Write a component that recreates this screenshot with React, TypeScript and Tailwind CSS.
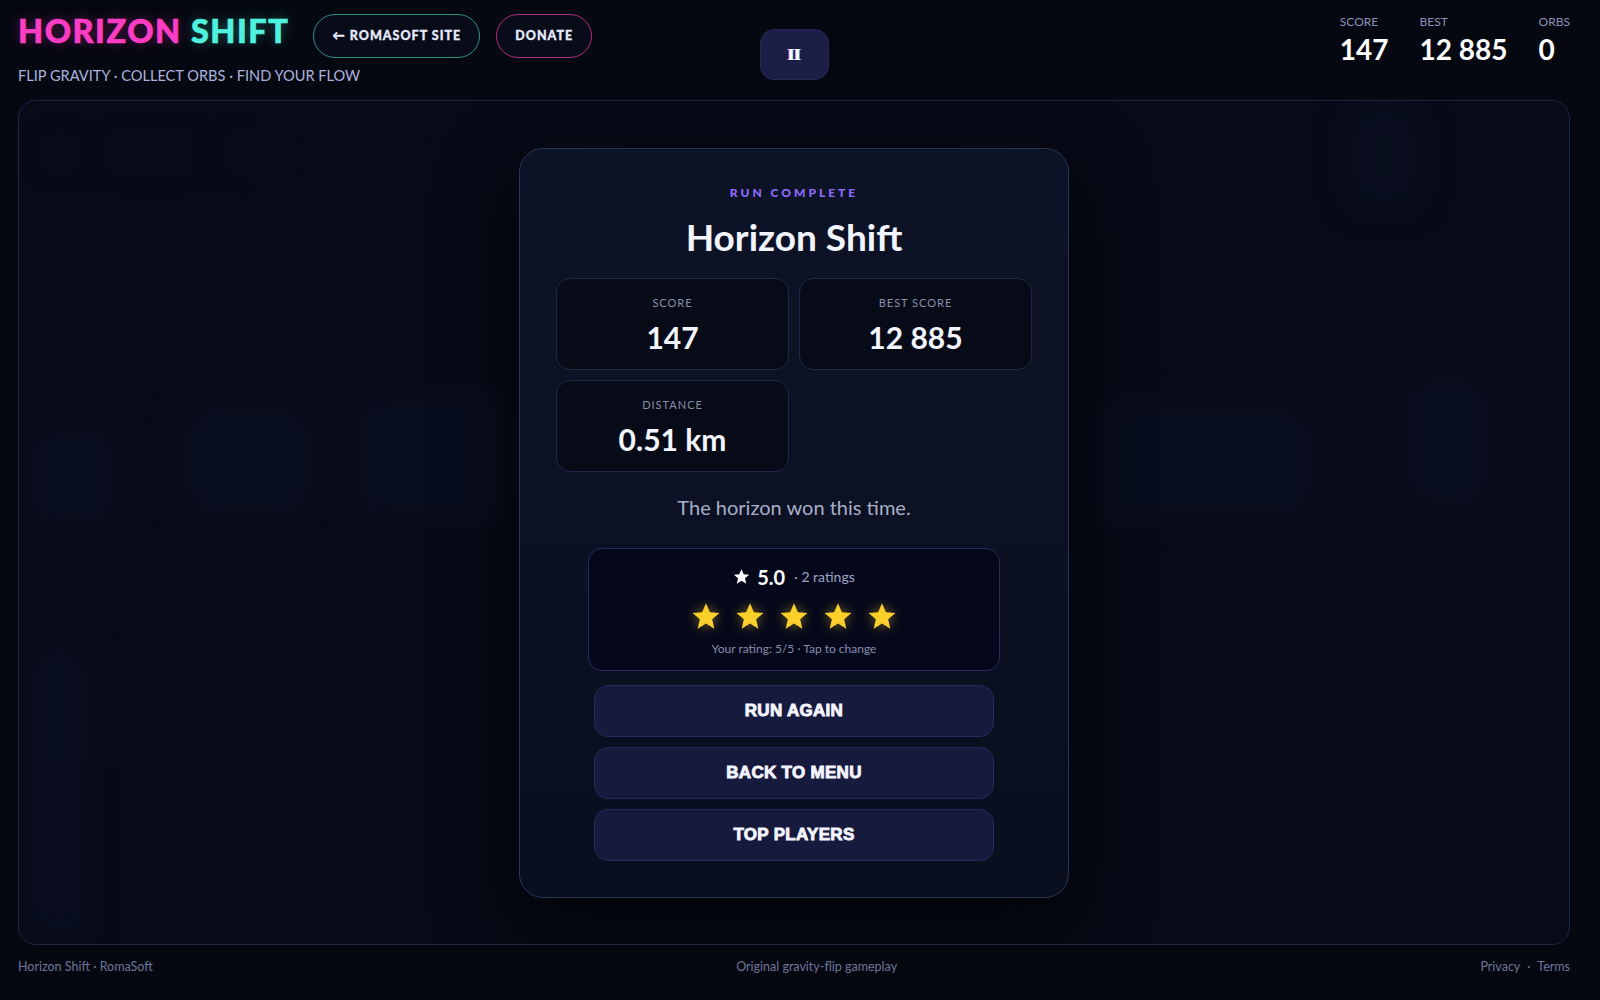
import { Fragment } from "react";

const stats = [
  { label: "SCORE", value: "147" },
  { label: "BEST", value: "12 885" },
  { label: "ORBS", value: "0" },
];

const results = [
  { label: "SCORE", value: "147" },
  { label: "BEST SCORE", value: "12 885" },
  { label: "DISTANCE", value: "0.51 km" },
];

const actions = ["RUN AGAIN", "BACK TO MENU", "TOP PLAYERS"];

// faint blurred shapes of the paused game scene behind the dialog
const ghosts = [
  { cls: "left-[22px] top-[40px] w-[40px] h-[26px]" },
  { cls: "left-[84px] top-[40px] w-[100px] h-[26px]" },
  { cls: "left-[200px] top-[40px] w-[70px] h-[26px]" },
  { cls: "left-[304px] top-[40px] w-[80px] h-[26px]" },
  { cls: "left-[1325px] top-[0px] w-[80px] h-[110px]" },
  { cls: "left-[4px] top-[320px] w-[100px] h-[110px]" },
  { cls: "left-[160px] top-[300px] w-[140px] h-[120px]" },
  { cls: "left-[330px] top-[290px] w-[160px] h-[130px]" },
  { cls: "left-[1080px] top-[300px] w-[220px] h-[120px]" },
  { cls: "left-[1380px] top-[270px] w-[100px] h-[140px]" },
  { cls: "left-[4px] top-[540px] w-[70px] h-[300px]" },
];

function Star({ size, className }: { size: number; className: string }) {
  return (
    <svg width={size} height={size} viewBox="0 0 24 24" className={className}>
      <path d="M12 1.8l3.1 7.1 7.7.6-5.9 5 1.8 7.6L12 18l-6.7 4.1 1.8-7.6-5.9-5 7.7-.6z" />
    </svg>
  );
}

export default function App() {
  return (
    <div className="min-h-screen bg-[#050811] pl-[18px] pr-[30px] text-white font-['Lato',sans-serif]">
      <header className="grid grid-cols-[1fr_auto_1fr] h-[100px]">
        <div className="pt-[14px]">
          <div className="flex items-center h-[44px]">
            <h1 className="mb-[9px] font-['Lato_Black','Lato',sans-serif] text-[32.5px] leading-none font-black tracking-[1.5px] whitespace-nowrap">
              <span className="text-[#ff3cc4] [-webkit-text-stroke:0.6px_#ff3cc4] [text-shadow:0_0_12px_rgba(255,60,196,0.35)]">HORIZON</span>{" "}
              <span className="text-[#4ff2de] [-webkit-text-stroke:0.6px_#4ff2de] [text-shadow:0_0_12px_rgba(79,242,222,0.35)]">SHIFT</span>
            </h1>
            <button className="ml-[24px] h-[44px] px-[18px] rounded-full border border-[#2c8f86] bg-[#080c18] font-['Lato_Black','Lato',sans-serif] text-[12.5px] font-black tracking-[1px] text-[#e7ebff] [-webkit-text-stroke:0.3px_#e7ebff] whitespace-nowrap">
              ← ROMASOFT SITE
            </button>
            <button className="ml-[16px] h-[44px] px-[18px] rounded-full border border-[#b0307e] bg-[#080c18] font-['Lato_Black','Lato',sans-serif] text-[12.5px] font-black tracking-[1px] text-[#e7ebff] [-webkit-text-stroke:0.3px_#e7ebff]">
              DONATE
            </button>
          </div>
          <p className="mt-[8px] text-[14.6px] leading-[20px] text-[#aab3df]">
            FLIP GRAVITY · COLLECT ORBS · FIND YOUR FLOW
          </p>
        </div>

        <div className="pt-[29px]">
          <button className="w-[69px] h-[51px] rounded-[14px] bg-[#1b1e45] border border-[#23285a] flex items-center justify-center font-['Liberation_Serif',serif] font-bold text-[17px] text-white [text-shadow:-1px_0_#ff6fb0,1px_0_#45d8ff]">
            II
          </button>
        </div>

        <div className="flex justify-end gap-[31px] pt-[14px]">
          {stats.map((s) => (
            <div key={s.label} className="flex flex-col">
              <span className="text-[12px] leading-[16px] text-[#8a92b8]">{s.label}</span>
              <span className="mt-[3px] text-[28px] leading-[32px] font-bold text-white">{s.value}</span>
            </div>
          ))}
        </div>
      </header>

      <main className="relative h-[845px] rounded-[18px] border border-[#1c2744] bg-[#070a17] overflow-hidden flex items-center justify-center">
        {ghosts.map((g, i) => (
          <div key={i} className={`absolute ${g.cls} rounded-md bg-[#13203a] opacity-[0.22] blur-lg`} />
        ))}

        <section className="relative w-[550px] rounded-[24px] border border-[#283556] bg-[linear-gradient(180deg,#0d1326_0%,#0a0f1f_100%)] px-[36px] pt-[36px] pb-[36px] shadow-[0_30px_80px_rgba(0,0,0,0.7)] flex flex-col items-center">
          <div className="text-[12px] leading-[16px] font-black tracking-[3px] text-[#8d6bfa]">RUN COMPLETE</div>
          <h2 className="mt-[14px] text-[37px] leading-[44px] font-bold text-[#f2f4ff]">Horizon Shift</h2>

          <div className="mt-[19px] w-full grid grid-cols-2 gap-[10px]">
            {results.map((r) => (
              <div key={r.label} className="h-[92px] rounded-[14px] border border-[#1f2946] bg-[#070b17] flex flex-col items-center pt-[16px]">
                <span className="text-[11px] leading-[16px] tracking-[1px] text-[#8790ad]">{r.label}</span>
                <span className="mt-[8px] text-[30px] leading-[36px] font-bold text-[#f4f6ff]">{r.value}</span>
              </div>
            ))}
          </div>

          <p className="mt-[22px] text-[20px] leading-[26px] text-[#a7afc8]">The horizon won this time.</p>

          <div className="mt-[28px] w-[412px] rounded-[14px] border border-[#262c5c] bg-[#05081a] flex flex-col items-center pt-[18px] pb-[13px]">
            <div className="flex items-center h-[20px]">
              <Star size={17} className="fill-white" />
              <span className="ml-[7px] text-[20px] font-bold text-white">5.0</span>
              <span className="ml-[9px] text-[14px] text-[#9ca3c6]">· 2 ratings</span>
            </div>
            <div className="mt-[14px] flex gap-[14px]">
              {[1, 2, 3, 4, 5].map((n) => (
                <Fragment key={n}>
                  <Star size={30} className="fill-[#fcd02b] [filter:drop-shadow(0_0_6px_rgba(252,208,43,0.45))]" />
                </Fragment>
              ))}
            </div>
            <p className="mt-[10px] text-[12px] leading-[16px] text-[#868eae]">Your rating: 5/5 · Tap to change</p>
          </div>

          <div className="mt-[14px] w-[400px] flex flex-col gap-[10px]">
            {actions.map((a) => (
              <button
                key={a}
                className="h-[52px] rounded-[14px] border border-[#252a5a] bg-[#161a3c] font-['Liberation_Sans',sans-serif] font-bold text-[17px] tracking-[0.3px] text-[#f4f5ff] [-webkit-text-stroke:0.9px_#f4f5ff]"
              >
                {a}
              </button>
            ))}
          </div>
        </section>
      </main>

      <footer className="flex justify-between items-center h-[44px] text-[12.5px] text-[#6e7699]">
        <span>Horizon Shift · RomaSoft</span>
        <span>Original gravity-flip gameplay</span>
        <span>
          Privacy <span className="mx-[4px]">·</span> Terms
        </span>
      </footer>
    </div>
  );
}
